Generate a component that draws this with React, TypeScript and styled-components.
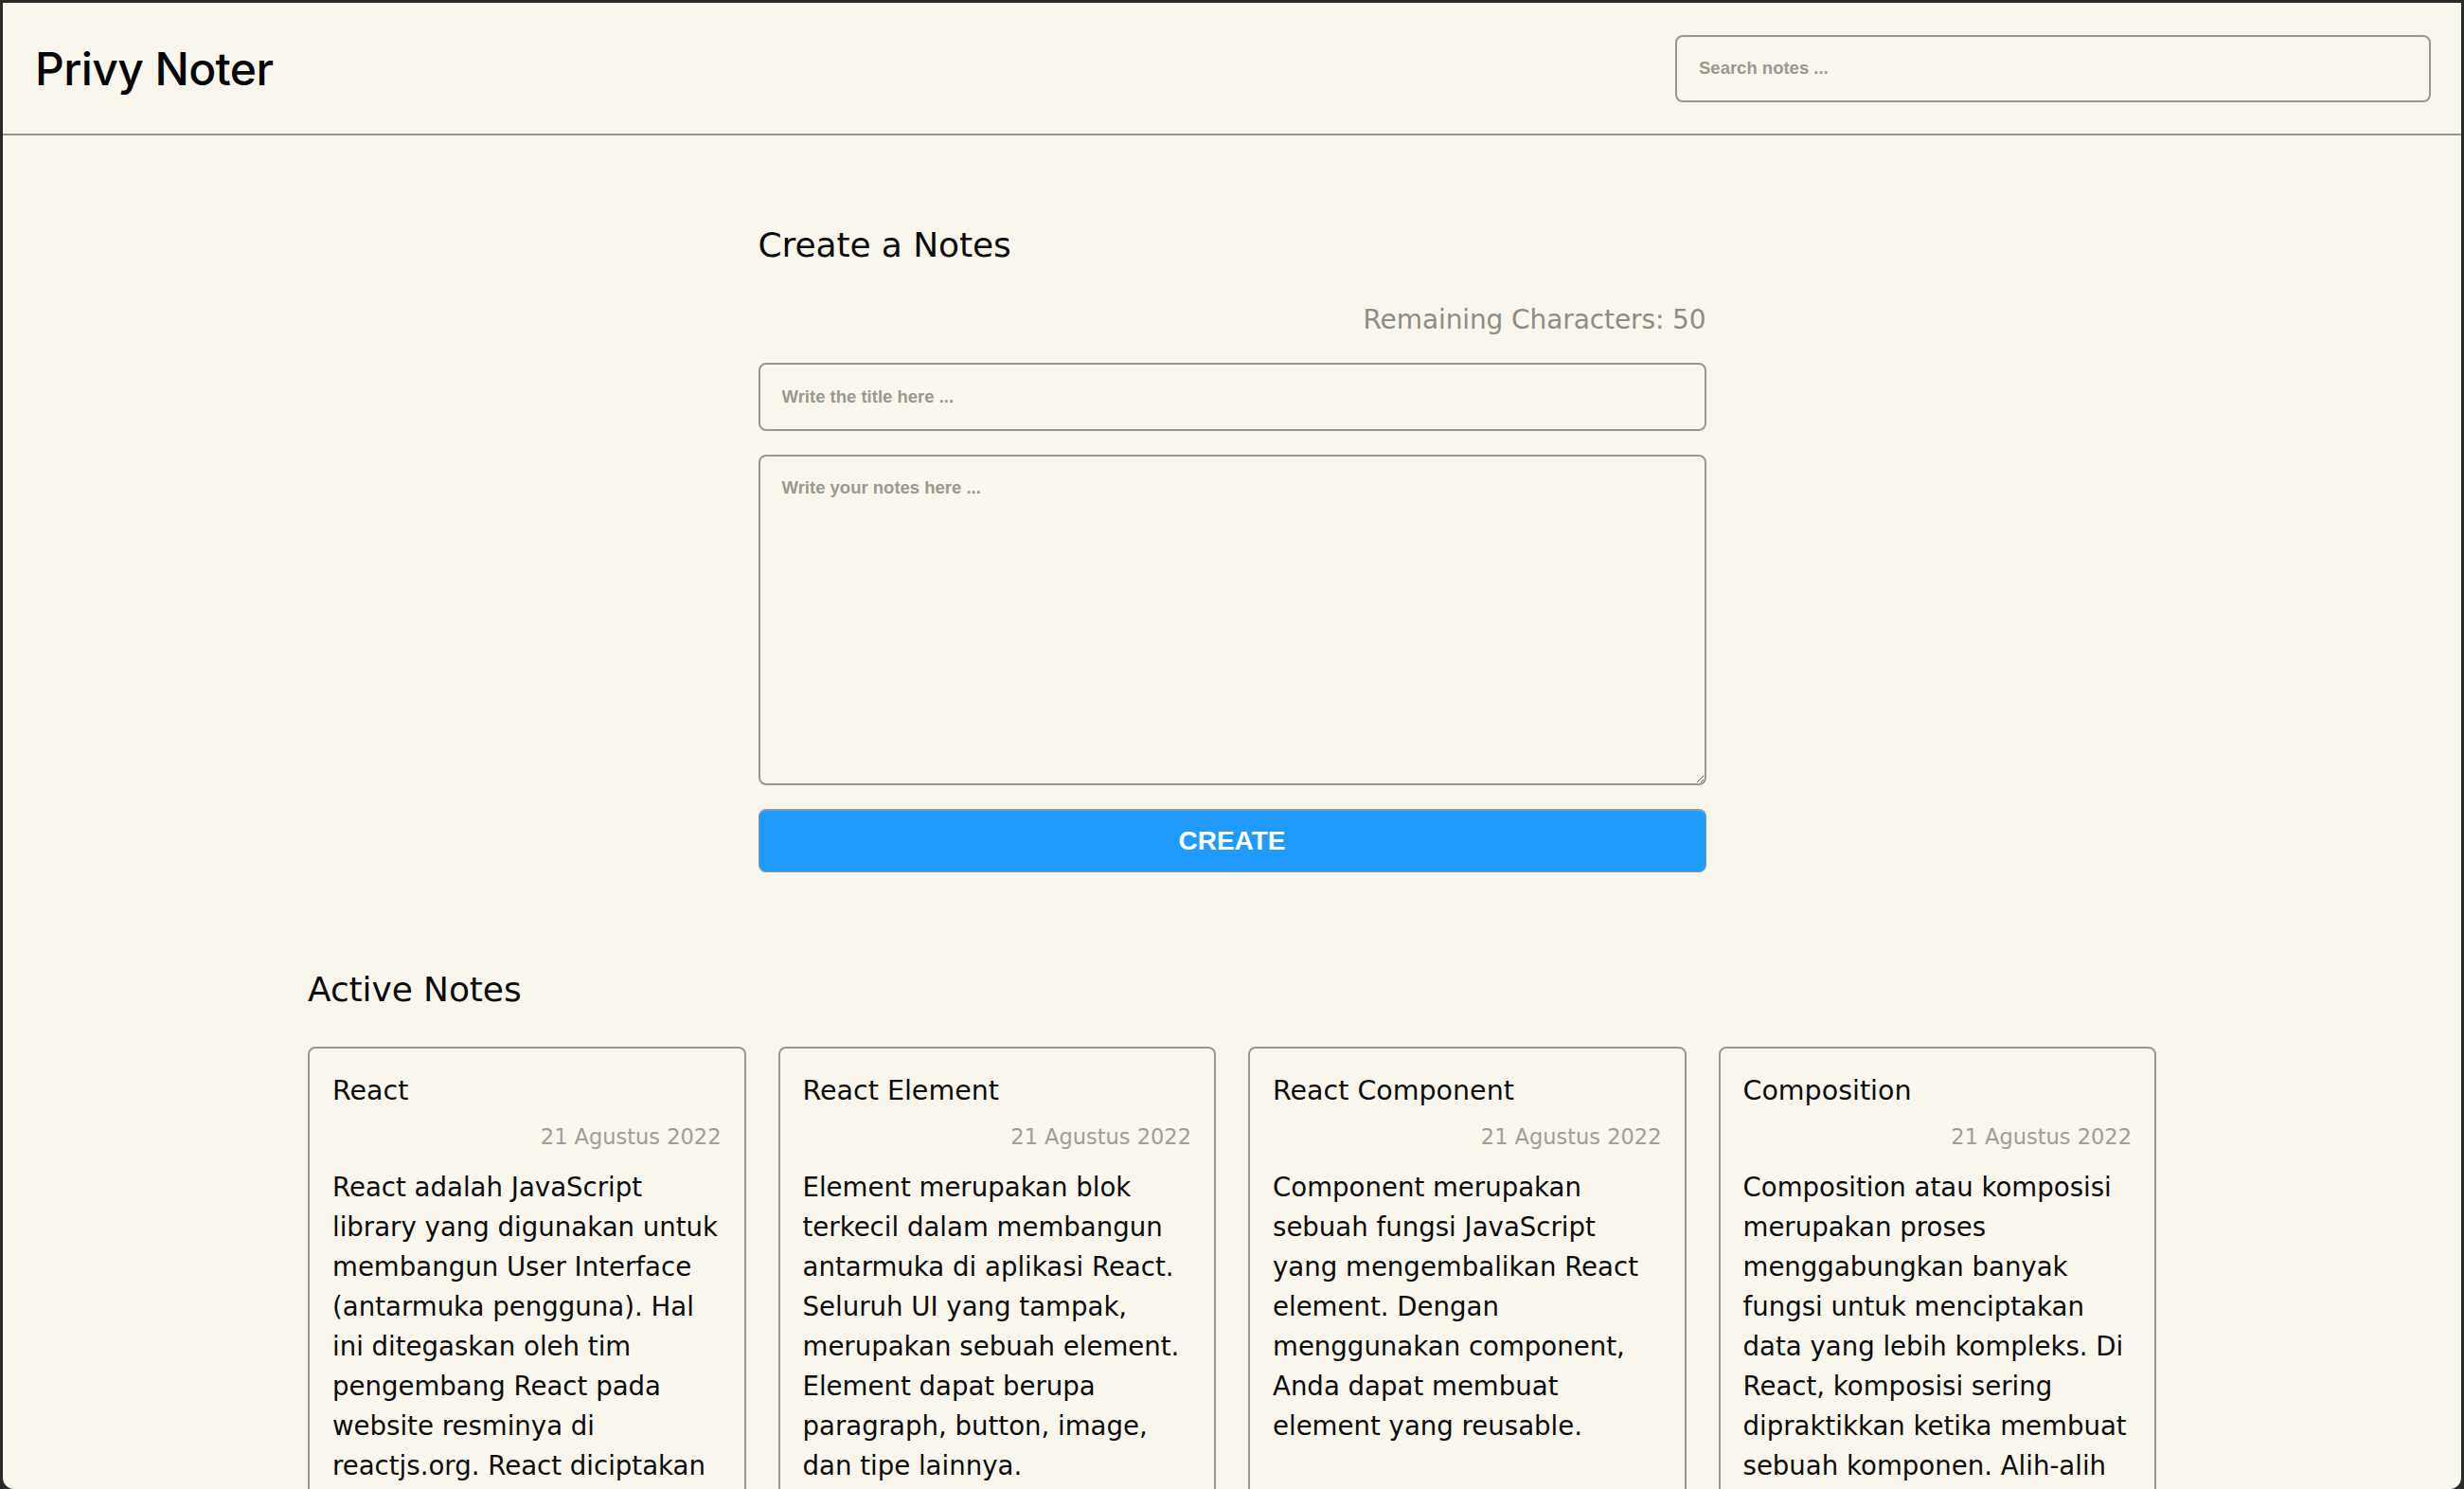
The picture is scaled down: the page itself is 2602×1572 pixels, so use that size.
import React from "react";
import styled, { createGlobalStyle } from "styled-components";

const GlobalStyle = createGlobalStyle`
  html, body {
    margin: 0;
    padding: 0;
    background: #2a2a2a;
  }
  * { box-sizing: border-box; }
`;

const BODY_FONT = `"DejaVu Sans", "Noto Sans", sans-serif`;
const INPUT_FONT = `"Liberation Sans", Arial, sans-serif`;
const LINE = "#9b978d";
const CREAM = "#f9f6ee";

const Frame = styled.div`
  padding: 3px 3px 0;
  min-height: 100vh;
`;

const Window = styled.div`
  background: ${CREAM};
  height: calc(100vh - 3px);
  overflow: hidden;
  border-radius: 0 0 12px 12px;
  color: #0b0b0b;
  font-family: ${BODY_FONT};
`;

const Header = styled.header`
  display: flex;
  align-items: center;
  justify-content: space-between;
  height: 140px;
  padding: 0 32px 0 34px;
  border-bottom: 2px solid ${LINE};
`;

const Brand = styled.h1`
  margin: 0;
  font-family: Inter, "Liberation Sans", sans-serif;
  font-size: 48px;
  font-weight: 500;
  letter-spacing: -0.6px;
  color: #050505;
`;

const fieldBase = `
  border: 2px solid ${LINE};
  border-radius: 8px;
  background: transparent;
  font-family: ${INPUT_FONT};
  font-size: 18.5px;
  font-weight: 700;
  color: #222;
  outline: none;
  &::placeholder {
    color: #9c988f;
    font-weight: 700;
  }
`;

const SearchInput = styled.input`
  ${fieldBase}
  width: 798px;
  height: 71px;
  padding: 0 23px;
`;

const Main = styled.main`
  padding-top: 94px;
`;

const Composer = styled.section`
  width: 1001px;
  margin: 0 auto;
  display: flex;
  flex-direction: column;
`;

const SectionHeading = styled.h2`
  margin: 0;
  font-size: 36px;
  line-height: 43px;
  font-weight: 400;
  letter-spacing: -0.1px;
`;

const CharCount = styled.p`
  margin: 41px 0 0;
  text-align: right;
  font-size: 28px;
  line-height: 34px;
  color: #8f8c85;
  letter-spacing: -0.1px;
`;

const TitleInput = styled.input`
  ${fieldBase}
  margin-top: 28px;
  height: 72px;
  padding: 0 23px;
`;

const BodyInput = styled.textarea`
  ${fieldBase}
  margin-top: 25px;
  height: 349px;
  padding: 22px 23px;
  resize: vertical;
`;

const CreateButton = styled.button`
  margin-top: 25px;
  height: 67px;
  border: 1px solid #8296a8;
  border-top: 2px solid #8a9aa8;
  border-radius: 8px;
  background: #1f9bff;
  color: #ffffff;
  font-family: ${INPUT_FONT};
  font-size: 28px;
  font-weight: 700;
  cursor: pointer;
`;

const NotesSection = styled.section`
  width: 1952px;
  margin: 102px auto 0;
`;

const NotesGrid = styled.div`
  margin-top: 39px;
  display: grid;
  grid-template-columns: repeat(4, 1fr);
  gap: 34px;
`;

const Card = styled.article`
  border: 2px solid ${LINE};
  border-radius: 8px;
  padding: 25px 24px 24px;
`;

const CardTitle = styled.h3`
  margin: 0;
  font-size: 28.5px;
  line-height: 40px;
  font-weight: 400;
`;

const CardDate = styled.p`
  margin: 12px 0 0;
  text-align: right;
  font-size: 22.5px;
  line-height: 32px;
  color: #a19e97;
`;

const CardBody = styled.p`
  margin: 17px 0 0;
  font-size: 27.6px;
  line-height: 42px;
`;

type Note = { id: number; title: string; date: string; body: string };

const notes: Note[] = [
  {
    id: 1,
    title: "React",
    date: "21 Agustus 2022",
    body:
      "React adalah JavaScript library yang digunakan untuk membangun User Interface (antarmuka pengguna). Hal ini ditegaskan oleh tim pengembang React pada website resminya di reactjs.org. React diciptakan oleh Jordan Walke, seorang software engineer di Facebook.",
  },
  {
    id: 2,
    title: "React Element",
    date: "21 Agustus 2022",
    body:
      "Element merupakan blok terkecil dalam membangun antarmuka di aplikasi React. Seluruh UI yang tampak, merupakan sebuah element. Element dapat berupa paragraph, button, image, dan tipe lainnya.",
  },
  {
    id: 3,
    title: "React Component",
    date: "21 Agustus 2022",
    body:
      "Component merupakan sebuah fungsi JavaScript yang mengembalikan React element. Dengan menggunakan component, Anda dapat membuat element yang reusable.",
  },
  {
    id: 4,
    title: "Composition",
    date: "21 Agustus 2022",
    body:
      "Composition atau komposisi merupakan proses menggabungkan banyak fungsi untuk menciptakan data yang lebih kompleks. Di React, komposisi sering dipraktikkan ketika membuat sebuah komponen. Alih-alih membuat satu komponen besar, kita dapat memecahnya menjadi komponen kecil.",
  },
];

export default function App() {
  return (
    <>
      <GlobalStyle />
      <Frame>
        <Window>
          <Header>
            <Brand>Privy Noter</Brand>
            <SearchInput type="text" placeholder="Search notes ..." />
          </Header>
          <Main>
            <Composer>
              <SectionHeading>Create a Notes</SectionHeading>
              <CharCount>Remaining Characters: 50</CharCount>
              <TitleInput type="text" placeholder="Write the title here ..." />
              <BodyInput placeholder="Write your notes here ..." />
              <CreateButton type="button">CREATE</CreateButton>
            </Composer>
            <NotesSection>
              <SectionHeading>Active Notes</SectionHeading>
              <NotesGrid>
                {notes.map((n) => (
                  <Card key={n.id}>
                    <CardTitle>{n.title}</CardTitle>
                    <CardDate>{n.date}</CardDate>
                    <CardBody>{n.body}</CardBody>
                  </Card>
                ))}
              </NotesGrid>
            </NotesSection>
          </Main>
        </Window>
      </Frame>
    </>
  );
}
